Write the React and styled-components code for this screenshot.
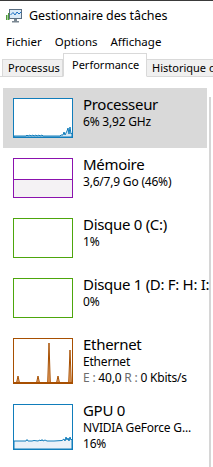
import React from "react";
import styled, { createGlobalStyle } from "styled-components";

const Global = createGlobalStyle`
  html, body { margin: 0; padding: 0; background: #fff; }
  body {
    font-family: "Noto Sans", "Open Sans", sans-serif;
    color: #000;
    width: 213px;
    height: 467px;
    overflow: hidden;
  }
`;

const Window = styled.div`
  width: 213px;
  height: 467px;
  display: flex;
  flex-direction: column;
  border-top: 1px solid #3a3a3a;
  box-sizing: border-box;
  overflow: hidden;
`;

const TitleBar = styled.div`
  height: 29px;
  display: flex;
  align-items: center;
  gap: 7px;
  padding-left: 6px;
  font-size: 12.5px;
  letter-spacing: -0.1px;
`;

const MenuBar = styled.div`
  height: 22px;
  display: flex;
  align-items: center;
  padding-left: 6px;
  gap: 13px;
  font-size: 11.5px;
`;

const TabStrip = styled.div`
  height: 25px;
  display: flex;
  align-items: flex-end;
  padding-left: 2px;
  position: relative;
  white-space: nowrap;
  &::after {
    content: "";
    position: absolute;
    left: 0;
    right: 0;
    bottom: 0;
    height: 1px;
    background: #d9d9d9;
  }
`;

const Tab = styled.div`
  box-sizing: border-box;
  height: ${(p) => (p.$active ? "24px" : "18px")};
  width: ${(p) => p.$w}px;
  flex: none;
  background: ${(p) => (p.$active ? "#fff" : "#f0f0f0")};
  border: 1px solid #d9d9d9;
  border-bottom: ${(p) => (p.$active ? "1px solid #fff" : "none")};
  border-left: ${(p) => (p.$first || p.$active ? "1px solid #d9d9d9" : "none")};
  font-size: 11px;
  padding-left: ${(p) => (p.$active ? 8 : 5)}px;
  line-height: ${(p) => (p.$active ? "21px" : "16px")};
  position: relative;
  z-index: ${(p) => (p.$active ? 1 : 0)};
  overflow: hidden;
`;

const Body = styled.div`
  flex: 1;
  display: flex;
  padding-top: 11px;
  min-height: 0;
`;

const List = styled.div`
  width: 206px;
  padding-left: 3px;
  display: flex;
  flex-direction: column;
  overflow: hidden;
  flex: none;
`;

const Splitter = styled.div`
  width: 2px;
  margin-top: 9px;
  background: #d6d6d6;
  flex: none;
`;

const Item = styled.div`
  display: flex;
  align-items: stretch;
  gap: 10px;
  padding: 10px 0 10px 10px;
  background: ${(p) => (p.$selected ? "#d9d9d9" : "transparent")};
  width: 204px;
  box-sizing: border-box;
  white-space: nowrap;
`;

const Graph = styled.div`
  flex: none;
  width: 60px;
  min-height: 40px;
  box-sizing: border-box;
  border: 1px solid ${(p) => p.$color};
  background: #fff;
  position: relative;
  display: flex;
  flex-direction: column;
  justify-content: flex-end;
  overflow: hidden;
`;

const MemFill = styled.div`
  border-top: 1px solid #8b12ae;
  background: #f4f2f4;
`;

const Svg = styled.svg`
  position: absolute;
  left: 0;
  top: 0;
  width: 100%;
  height: 100%;
  display: block;
`;

const Info = styled.div`
  margin: -3px 0 -2px;
  display: flex;
  flex-direction: column;
  min-width: 0;
`;

const Name = styled.div`
  font-size: 15px;
  line-height: 18px;
  margin-bottom: 1px;
  letter-spacing: -0.3px;
`;

const Sub = styled.div`
  font-size: 12px;
  line-height: 16px;
  letter-spacing: -0.2px;
`;

const Dim = styled.span`
  color: #6d6d6d;
`;

const TaskIcon = () => (
  <svg width="16" height="14" viewBox="0 0 16 14">
    <rect x="0" y="6" width="1.5" height="5" fill="#4f9a3c" />
    <rect x="2" y="4" width="1.5" height="7" fill="#4f9a3c" />
    <rect x="3.5" y="0.5" width="12" height="9" fill="#dbeaf7" stroke="#5a6e82" />
    <polyline points="4.5,6 7,3.5 9,6 11,3 13,5 15,3" fill="none" stroke="#1b6fc2" strokeWidth="1" />
    <rect x="8" y="10" width="3" height="2" fill="#7a8792" />
    <rect x="6" y="12" width="7" height="1.5" fill="#7a8792" />
  </svg>
);

const CpuGraph = () => (
  <Svg viewBox="0 0 58 38" preserveAspectRatio="none">
    <path
      d="M0 37 L12 37 L13 36 L14 37 L16 36 L17 37 L19 36 L20 37 L22 36 L23 37 L25 36 L26 37 L28 36 L29 37 L34 37 L46 37 L47 36 L49 36 L50 33 L51 36 L52 34 L53 32 L54 29 L55 35 L56 28 L57 35 L58 34 L58 38 L0 38 Z"
      fill="#d8e7f3"
      stroke="#117dbb"
      strokeWidth="1"
      vectorEffect="non-scaling-stroke"
    />
  </Svg>
);

const spike = (x, top, base, w = 1.5) => `M${x - w} ${base} L${x} ${top} L${x + w} ${base}`;

const NetGraph = () => (
  <Svg viewBox="0 0 58 44" preserveAspectRatio="none">
    <defs>
      <linearGradient id="eth" x1="0" y1="0" x2="0" y2="1">
        <stop offset="0" stopColor="#fbe3cc" />
        <stop offset="1" stopColor="#e39a5a" />
      </linearGradient>
    </defs>
    {[
      [4, 37],
      [24, 37],
      [35, 4],
      [44, 37],
      [56, 11],
    ].map(([x, t]) => (
      <path
        key={x}
        d={spike(x, t, 44, t < 20 ? 1.3 : 1.5) + " Z"}
        fill="url(#eth)"
        stroke="#a74f01"
        strokeWidth="1"
        vectorEffect="non-scaling-stroke"
      />
    ))}
    <line x1="0" y1="43.5" x2="58" y2="43.5" stroke="#a74f01" strokeWidth="1" vectorEffect="non-scaling-stroke" />
  </Svg>
);

const GpuGraph = () => (
  <Svg viewBox="0 0 58 44" preserveAspectRatio="none">
    <path
      d="M0 36 L12 36 L13 34.5 L14 36 L18 36 L20 35.5 L24 36 L26 35 L27 36 L28 34.5 L29 36 L31 35 L33 36 L40 36 L48 35.5 L50 34 L51 36 L52 32 L53 35 L54 33 L55 36 L56 32 L57 35 L58 34 L58 44 L0 44 Z"
      fill="#eaf1f8"
      stroke="#117dbb"
      strokeWidth="1"
      vectorEffect="non-scaling-stroke"
    />
  </Svg>
);

const items = [
  { name: "Processeur", color: "#117dbb", lines: ["6%  3,92 GHz"], graph: <CpuGraph />, selected: true },
  { name: "Mémoire", color: "#8b12ae", lines: ["3,6/7,9 Go (46%)"], mem: 46 },
  { name: "Disque 0 (C:)", color: "#4da60c", lines: ["1%"] },
  { name: "Disque 1 (D: F: H: I:", color: "#4da60c", lines: ["0%"] },
  {
    name: "Ethernet",
    color: "#a74f01",
    lines: [
      "Ethernet",
      <>
        <Dim>E :</Dim> 40,0 <Dim>R :</Dim> 0 Kbits/s
      </>,
    ],
    graph: <NetGraph />,
  },
  { name: "GPU 0", color: "#117dbb", lines: ["NVIDIA GeForce G...", "16%"], graph: <GpuGraph /> },
];

export default function App() {
  return (
    <>
      <Global />
      <Window>
        <TitleBar>
          <TaskIcon />
          <span>Gestionnaire des tâches</span>
        </TitleBar>
        <MenuBar>
          <span>Fichier</span>
          <span>Options</span>
          <span>Affichage</span>
        </MenuBar>
        <TabStrip>
          <Tab $w={61} $first>Processus</Tab>
          <Tab $w={84} $active>Performance</Tab>
          <Tab $w={80}>Historique des applications</Tab>
        </TabStrip>
        <Body>
          <List>
            {items.map((it) => (
              <Item key={it.name} $selected={it.selected}>
                <Graph $color={it.color}>
                  {it.graph}
                  {it.mem != null && <MemFill style={{ height: `${it.mem}%` }} />}
                </Graph>
                <Info>
                  <Name>{it.name}</Name>
                  {it.lines.map((l, i) => (
                    <Sub key={i}>{l}</Sub>
                  ))}
                </Info>
              </Item>
            ))}
          </List>
          <Splitter />
        </Body>
      </Window>
    </>
  );
}
